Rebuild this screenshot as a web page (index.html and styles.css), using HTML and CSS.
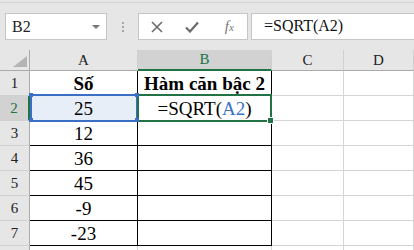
FILE: index.html
```html
<!DOCTYPE html>
<html lang="vi">
<head>
    <meta charset="UTF-8">
    <title>SQRT</title>
    <link rel="stylesheet" href="styles.css">
</head>
<body>
    <div class="toolbar">
        <div class="namebox">
            <span>B2</span>
            <span class="drop"></span>
        </div>
        <div class="grip"><i></i><i></i><i></i></div>
        <div class="funcs">
            <span class="fbtn">
                <svg width="12" height="12" viewBox="0 0 12 12"><path d="M1 1L11 11M11 1L1 11" stroke="#6b6b6b" stroke-width="1.6" fill="none"/></svg>
            </span>
            <span class="fbtn">
                <svg width="14" height="12" viewBox="0 0 14 12"><path d="M1 6.5L5 10.5L13 1.5" stroke="#6b6b6b" stroke-width="2.2" fill="none"/></svg>
            </span>
            <span class="fbtn fx">f<sub>x</sub></span>
        </div>
        <div class="formula">=SQRT(A2)</div>
    </div>

    <div class="sheet">
        <div class="corner"><span class="tri"></span></div>
        <div class="colhead">A</div>
        <div class="colhead active">B</div>
        <div class="colhead">C</div>
        <div class="colhead">D</div>

        <div class="rowhead">1</div>
        <div class="cell data bold">Số</div>
        <div class="cell data bold">Hàm căn bậc 2</div>
        <div class="cell"></div>
        <div class="cell"></div>

        <div class="rowhead active">2</div>
        <div class="cell data ref">25</div>
        <div class="cell data current">=SQRT(<span class="blue">A2</span>)</div>
        <div class="cell"></div>
        <div class="cell"></div>

        <div class="rowhead">3</div>
        <div class="cell data">12</div>
        <div class="cell data"></div>
        <div class="cell"></div>
        <div class="cell"></div>

        <div class="rowhead">4</div>
        <div class="cell data">36</div>
        <div class="cell data"></div>
        <div class="cell"></div>
        <div class="cell"></div>

        <div class="rowhead">5</div>
        <div class="cell data">45</div>
        <div class="cell data"></div>
        <div class="cell"></div>
        <div class="cell"></div>

        <div class="rowhead">6</div>
        <div class="cell data">-9</div>
        <div class="cell data"></div>
        <div class="cell"></div>
        <div class="cell"></div>

        <div class="rowhead">7</div>
        <div class="cell data">-23</div>
        <div class="cell data"></div>
        <div class="cell"></div>
        <div class="cell"></div>

        <div class="rowhead"></div>
        <div class="cell"></div>
        <div class="cell"></div>
        <div class="cell"></div>
        <div class="cell"></div>
    </div>
</body>
</html>
```

FILE: styles.css
```css
body {
    margin: 0;
    background-color: #e6e6e6;
    font-family: "Liberation Serif", "Times New Roman", serif;
    overflow: hidden;
}

.toolbar {
    margin-top: 2px;
    height: 48px;
    box-sizing: border-box;
    border-top: 1px solid #d4d4d4;
    padding: 10px 0 0 5px;
    display: flex;
    align-items: flex-start;
}

.namebox,
.funcs,
.formula {
    height: 27px;
    box-sizing: border-box;
    background-color: #fff;
    border: 1px solid #c6c6c6;
}

.namebox {
    width: 102px;
    display: flex;
    align-items: center;
    justify-content: space-between;
    padding: 0 6px 0 6px;
    font-size: 16px;
    color: #222;
}

.drop {
    width: 0;
    height: 0;
    border-left: 4px solid transparent;
    border-right: 4px solid transparent;
    border-top: 4px solid #777;
}

.grip {
    width: 31px;
    height: 27px;
    display: flex;
    flex-direction: column;
    align-items: center;
    justify-content: center;
    gap: 2px;
}

.grip i {
    width: 2px;
    height: 2px;
    background-color: #a6a6a6;
}

.funcs {
    width: 110px;
    display: flex;
}

.fbtn {
    width: 36px;
    display: flex;
    align-items: center;
    justify-content: center;
}

.fx {
    font-style: italic;
    font-size: 15px;
    color: #777;
    padding-left: 2px;
}

.fx sub {
    font-size: 11px;
    vertical-align: -1px;
}

.formula {
    flex: 1;
    margin-left: 3px;
    border-right: none;
    padding-left: 12px;
    font-size: 16px;
    line-height: 24px;
    color: #111;
}

.sheet {
    display: grid;
    grid-template-columns: 30px 108px 134px 72px 1fr;
    grid-template-rows: 21px;
    grid-auto-rows: 25px;
    background-color: #fff;
}

.corner,
.colhead,
.rowhead {
    background-color: #e6e6e6;
    box-sizing: border-box;
    display: flex;
    align-items: center;
    justify-content: center;
    font-size: 15px;
    color: #222;
}

.corner {
    border-right: 1px solid #ababab;
    border-bottom: 1px solid #ababab;
    position: relative;
}

.tri {
    position: absolute;
    right: 2px;
    bottom: 3px;
    width: 0;
    height: 0;
    border-left: 14px solid transparent;
    border-bottom: 11px solid #b4b4b4;
}

.colhead {
    border-right: 1px solid #d0d0d0;
    border-bottom: 1px solid #ababab;
}

.colhead.active {
    background-color: #d2d2d2;
    color: #217346;
    border-bottom: 2px solid #217346;
}

.rowhead {
    border-right: 1px solid #ababab;
    border-bottom: 1px solid #d0d0d0;
}

.rowhead.active {
    background-color: #d2d2d2;
    color: #217346;
    border-right: 2px solid #217346;
}

.cell {
    box-sizing: border-box;
    border-right: 1px solid #d4d4d4;
    border-bottom: 1px solid #d4d4d4;
    font-size: 19px;
    color: #000;
    display: flex;
    align-items: flex-end;
    justify-content: center;
    white-space: nowrap;
}

.cell.data {
    border-right-color: #000;
    border-bottom-color: #000;
}

.bold {
    font-weight: bold;
}

.blue {
    color: #3b73c9;
}

.ref {
    background-color: #e8eef8;
    position: relative;
}

.ref::after {
    content: "";
    position: absolute;
    left: 0;
    top: -2px;
    right: -1px;
    bottom: -2px;
    border: 2px solid #3b6fc5;
}

/* corner handles of the referenced range */
.ref::before {
    content: "";
    position: absolute;
    left: -1px;
    top: -3px;
    width: 4px;
    height: 4px;
    background-color: #3b6fc5;
    box-shadow: 106px 0 #3b6fc5, 0 25px #3b6fc5, 106px 25px #3b6fc5;
    z-index: 1;
}

.current {
    position: relative;
}

.current::after {
    content: "";
    position: absolute;
    left: -1px;
    top: -2px;
    right: -1px;
    bottom: -2px;
    border: 2px solid #217346;
}

.current::before {
    content: "";
    position: absolute;
    right: -3px;
    bottom: -4px;
    width: 5px;
    height: 5px;
    background-color: #217346;
    border: 1px solid #fff;
    z-index: 1;
}
```
